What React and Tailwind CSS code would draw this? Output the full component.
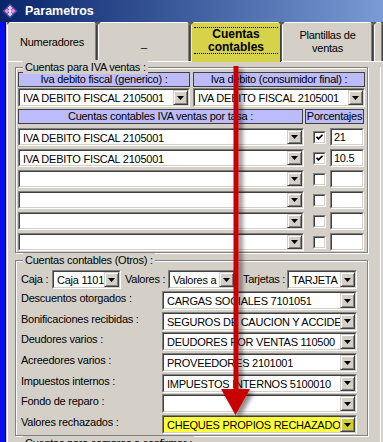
import React from 'react';

// classic 3D sunken box
const sunken =
  'border border-t-[#808080] border-l-[#808080] border-b-white border-r-white';
const sunkenInner =
  'border border-t-[#404040] border-l-[#404040] border-b-[#d4d0c8] border-r-[#d4d0c8]';

const DropButton = ({ yellow }) => (
  <div
    className={`w-[15px] h-full flex items-center justify-center border border-t-[#d4d0c8] border-l-[#d4d0c8] border-b-[#404040] border-r-[#404040] shadow-[inset_1px_1px_0_#fff,inset_-1px_-1px_0_#808080] ${
      yellow ? 'bg-[#cfcf34]' : 'bg-[#d4d0c8]'
    }`}
  >
    <svg width="7" height="4" viewBox="0 0 7 4">
      <path d="M0 0h7L3.5 4z" fill="#000" />
    </svg>
  </div>
);

const Combo = ({ text, className = '', yellow }) => (
  <div className={`flex ${sunken} ${className}`}>
    <div className={`flex-1 flex min-w-0 ${sunkenInner} ${yellow ? 'bg-[#ffff3a]' : 'bg-white'}`}>
      <span className="flex-1 min-w-0 overflow-hidden whitespace-nowrap pl-[3px] pt-[1px] leading-[14px]">{text}</span>
      <DropButton yellow={yellow} />
    </div>
  </div>
);

const TextBox = ({ text, className = '' }) => (
  <div className={`${sunken} ${className}`}>
    <div className={`h-full bg-white ${sunkenInner} pl-[2px] pt-[1px] leading-[13px]`}>{text}</div>
  </div>
);

const Check = ({ checked }) => (
  <div className={`w-[13px] h-[13px] ${sunken}`}>
    <div className={`w-full h-full bg-white ${sunkenInner} flex items-center justify-center`}>
      {checked && (
        <svg width="7" height="7" viewBox="0 0 7 7">
          <path d="M0.5 2.8L2.5 4.8L6.5 0.8" stroke="#000" strokeWidth="1.8" fill="none" />
        </svg>
      )}
    </div>
  </div>
);

const Header = ({ children, className = '' }) => (
  <div
    className={`h-[15px] bg-[#bcbcfa] border border-[#404040] flex items-center justify-center whitespace-nowrap leading-[13px] ${className}`}
  >
    {children}
  </div>
);

const Group = ({ label, children, className = '' }) => (
  <div
    className={`relative border border-[#808080] shadow-[inset_1px_1px_0_#fff,1px_1px_0_#fff] ${className}`}
  >
    <span className="absolute -top-[8px] left-[7px] bg-[#d4d0c8] px-[2px] leading-[14px] whitespace-nowrap">{label}</span>
    {children}
  </div>
);

const Tab = ({ className = '', children, selected }) => (
  <div
    className={`flex flex-col items-center justify-center text-center leading-[13px] [clip-path:polygon(3px_0,calc(100%-3px)_0,100%_3px,100%_100%,0_100%,0_3px)] border-t border-l border-r ${
      selected
        ? 'relative z-10 h-[40px] -mb-[1px] bg-[#d6d24a] border-t-[#f4f0a8] border-l-[#f4f0a8] border-r-[#404040]'
        : 'h-[39px] bg-[#d4d0c8] border-t-white border-l-white border-r-[#404040] shadow-[inset_-1px_0_0_#808080]'
    } ${className}`}
  >
    {children}
  </div>
);

const Logo = () => (
  <svg width="16" height="16" viewBox="0 0 16 16">
    <path d="M8 0.5L15.5 8 8 15.5 0.5 8z" fill="#4a4aa8" />
    <path d="M8 2.5L10.5 5 8 7.5 5.5 5z" fill="#d8d8ff" />
    <path d="M8 8.5L10.5 11 8 13.5 5.5 11z" fill="#d8d8ff" />
    <path d="M5 5.5L7.5 8 5 10.5 2.5 8z" fill="#ff88d0" />
    <path d="M11 5.5L13.5 8 11 10.5 8.5 8z" fill="#ff88d0" />
    <path d="M8 6.5L9.5 8 8 9.5 6.5 8z" fill="#ffffff" />
  </svg>
);

const otros = [
  ['Descuentos otorgados :', 'CARGAS SOCIALES 7101051'],
  ['Bonificaciones recibidas :', 'SEGUROS DE CAUCION Y ACCIDE'],
  ['Deudores varios :', 'DEUDORES POR VENTAS 110500'],
  ['Acreedores varios :', 'PROVEEDORES 2101001'],
  ['Impuestos internos :', 'IMPUESTOS INTERNOS 5100010'],
  ['Fondo de reparo :', ''],
  ['Valores rechazados :', 'CHEQUES PROPIOS RECHAZADO', true],
];

const tasas = [
  ['IVA DEBITO FISCAL 2105001', true, '21'],
  ['IVA DEBITO FISCAL 2105001', true, '10.5'],
  ['', false, ''],
  ['', false, ''],
  ['', false, ''],
  ['', false, ''],
];

export default function App() {
  return (
    <div className="relative w-[383px] h-[442px] overflow-hidden bg-[#d4d0c8] text-[11px] tracking-[-0.25px] text-black font-['Liberation_Sans',Arial,sans-serif]">
      {/* Title bar */}
      <div className="flex items-center h-[22px] bg-linear-to-r from-[#0a246a] to-[#7b9bd6] pl-[2px]">
        <Logo />
        <span className="ml-[7px] text-white font-bold text-[12.5px] tracking-normal">Parametros</span>
      </div>

      <div className="flex h-[420px]">
        <div className="w-[6px] bg-[#0c0cf0] border-r border-[#000070]" />
        <div className="flex-1 flex flex-col pl-[1px]">
          {/* Tabs */}
          <div className="flex items-end h-[40px] gap-[1px] bg-[#5a5a5a]">
            <Tab className="w-[90px]">Numeradores</Tab>
            <Tab className="w-[92px] pt-[3px]">_</Tab>
            <Tab selected className="w-[90px] justify-start">
              <div className="mt-[4px] w-[84px] h-[27px] border-y border-dotted border-black font-bold text-[12px] tracking-normal flex flex-col justify-center">
                <span>Cuentas</span>
                <span>contables</span>
              </div>
            </Tab>
            <Tab className="w-[91px]">
              <span>Plantillas de</span>
              <span>ventas</span>
            </Tab>
            <Tab className="flex-1" />
          </div>

          {/* Page */}
          <div className="relative flex-1 border-t border-l border-white pl-[7px]">
            <div className="absolute right-[2px] top-[5px] bottom-0 w-[1px] bg-white" />

            <Group label="Cuentas para IVA ventas :" className="mt-[5px] w-[353px] pl-[2px] pt-[4px] pb-[1px]">
              <div className="flex gap-[3px]">
                <Header className="w-[172px]">Iva debito fiscal (generico) :</Header>
                <Header className="w-[172px]">Iva debito (consumidor final) :</Header>
              </div>
              <div className="flex gap-[3px] mt-[1px]">
                <Combo className="w-[172px] h-[19px]" text="IVA DEBITO FISCAL 2105001" />
                <Combo className="w-[172px] h-[19px]" text="IVA DEBITO FISCAL 2105001" />
              </div>
              <div className="flex gap-[2px] mt-[2px]">
                <Header className="w-[285px]">Cuentas contables IVA ventas por tasa :</Header>
                <Header className="w-[59px]">Porcentajes</Header>
              </div>
              <div className="flex flex-col gap-[3px] mt-[4px]">
                {tasas.map(([text, checked, pct], i) => (
                  <div key={i} className="flex items-center h-[18px]">
                    <Combo className="w-[286px] h-[18px]" text={text} />
                    <div className="pl-[9px] pr-[4px]">
                      <Check checked={checked} />
                    </div>
                    <TextBox className="w-[34px] h-[18px]" text={pct} />
                  </div>
                ))}
              </div>
            </Group>

            <Group label="Cuentas contables (Otros) :" className="mt-[7px] w-[353px] pl-[5px] pt-[9px] pb-[1px]">
              <div className="flex items-center h-[19px] whitespace-nowrap">
                <span className="w-[31px]">Caja :</span>
                <Combo className="w-[69px] h-[19px]" text="Caja 1101" />
                <span className="w-[47px] pl-[4px]">Valores :</span>
                <Combo className="w-[68px] h-[19px]" text="Valores a" />
                <span className="w-[51px] pl-[7px]">Tarjetas :</span>
                <Combo className="w-[70px] h-[19px]" text="TARJETA" />
              </div>
              <div className="flex flex-col gap-[1.7px] mt-[2px]">
                {otros.map(([label, value, yellow], i) => (
                  <div key={i} className="flex h-[19px]">
                    <span className="w-[141px] leading-[14px] whitespace-nowrap">{label}</span>
                    <Combo className="w-[195px] h-[19px]" text={value} yellow={yellow} />
                  </div>
                ))}
              </div>
            </Group>

            <Group label="Cuentas para compras a confirmar :" className="mt-[7px] w-[353px] h-[40px]" />
          </div>
        </div>
      </div>

      {/* Red annotation arrow */}
      <svg className="absolute left-0 top-0 pointer-events-none" width="383" height="442" viewBox="0 0 383 442">
        <defs>
          <filter id="sh" x="-50%" y="-10%" width="200%" height="120%">
            <feDropShadow dx="4" dy="3" stdDeviation="2" floodColor="#000" floodOpacity="0.45" />
          </filter>
        </defs>
        <g filter="url(#sh)">
          <rect x="233.5" y="66" width="5" height="326" fill="#c80000" />
          <path d="M221 389H250L235.5 415z" fill="#c80000" />
        </g>
      </svg>
    </div>
  );
}
